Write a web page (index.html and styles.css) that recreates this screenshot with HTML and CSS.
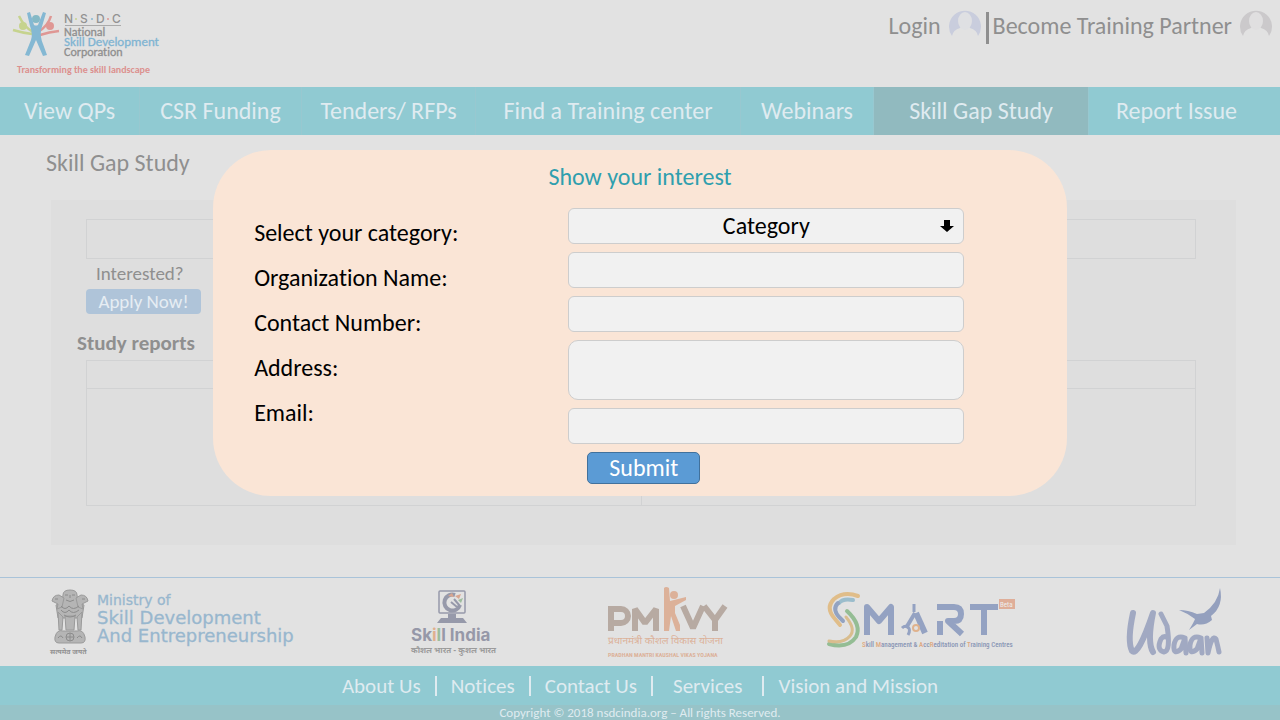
FILE: index.html
```html
<!DOCTYPE html>
<html lang="en">
<head>
<meta charset="utf-8">
<meta name="viewport" content="width=device-width, initial-scale=1">
<title>NSDC - Skill Gap Study</title>
<link rel="stylesheet" href="styles.css">
</head>
<body>
<header class="header">
  <a class="brand" href="#" aria-label="NSDC home">
    <svg class="brand-logo" width="150" height="72" viewBox="0 0 150 72">
      <g fill="none" stroke-linecap="butt">
        <path d="M1 18 Q11 21 20 22 M7 4 Q12 15 21 20" stroke="#c6d38e" stroke-width="2.5"/>
        <path d="M47 19 Q37 20 28 23 M39 4 Q36 14 26 20" stroke="#df9794" stroke-width="2.5"/>
      </g>
      <circle cx="11" cy="14" r="4" fill="#c6d38e"/>
      <circle cx="38" cy="14" r="4" fill="#df9794"/>
      <circle cx="24" cy="7" r="4" fill="#85b9c6"/>
      <path d="M15 1 L18 0 L22 13 Q24 14 26 13 L31 0 L34 1 L29 18 Q28 25 31 32 L35 43 L31 44 L24 28 L17 44 L13 43 L19 28 Q21 22 18 14 Z" fill="#84b8d3"/>
      <g class="logo-sans" font-size="12" font-weight="500" fill="#929292">
        <text x="52" y="11">N</text>
        <text x="68" y="11">S</text>
        <text x="84" y="11">D</text>
        <text x="100" y="11">C</text>
      </g>
      <circle cx="64" cy="7" r="1" fill="#c6d38e"/><circle cx="80" cy="7" r="1" fill="#84b8d3"/><circle cx="96" cy="7" r="1" fill="#df9794"/>
      <path d="M53 13.500H109" stroke="#aaa"/>
      <g class="logo-humanist" font-size="12" stroke-width=".3">
        <text x="52" y="24" fill="#8e8e8e" stroke="#8e8e8e">National</text>
        <text x="52" y="34" fill="#7fb4d2" stroke="#7fb4d2" font-size="13">Skill Development</text>
        <text x="52" y="44" fill="#8e8e8e" stroke="#8e8e8e">Corporation</text>
      </g>
      <text class="logo-humanist" x="5" y="61" font-size="10" font-weight="700" fill="#dc918f">Transforming the skill landscape</text>
    </svg>
  </a>
  <div class="account">
    <a class="account-link" href="#">Login
      <svg class="avatar" width="34" height="32" viewBox="0 2 34 32"><path d="M4 28 A16 16 0 1 1 30 28 Q29 22 22 20 H12 Q5 22 4 28Z" fill="#c9cddd"/><ellipse cx="17" cy="13" rx="7" ry="9" fill="#dfe0e3"/></svg>
    </a>
    <span class="account-rule"></span>
    <a class="account-link" href="#">Become Training Partner
      <svg class="avatar" width="34" height="32" viewBox="0 2 34 32"><path d="M4 28 A16 16 0 1 1 30 28 Q29 22 22 20 H12 Q5 22 4 28Z" fill="#cbc9cb"/><ellipse cx="17" cy="13" rx="7" ry="9" fill="#e0dfe0"/></svg>
    </a>
  </div>
</header>

<nav class="nav">
  <a href="#">View QPs</a>
  <a href="#">CSR Funding</a>
  <a href="#">Tenders/ RFPs</a>
  <a href="#">Find a Training center</a>
  <a href="#">Webinars</a>
  <a class="active" href="#" aria-current="page">Skill Gap Study</a>
  <a href="#">Report Issue</a>
</nav>

<main class="main">
  <h1 class="page-title">Skill Gap Study</h1>
  <section class="panel">
    <div class="summary"></div>
    <p class="interested">Interested?</p>
    <button class="apply" type="button">Apply Now!</button>
    <h2 class="reports-title">Study reports</h2>
    <table class="reports" aria-label="Study reports">
      <thead><tr><th></th><th></th></tr></thead>
      <tbody><tr><td></td><td></td></tr></tbody>
    </table>
  </section>
</main>

<section class="partners" aria-label="Partners">
  <svg width="246" height="72" viewBox="0 0 246 72">
    <g fill="#b5b5b5" stroke="#9a9a9a" stroke-width="1">
      <path d="M13 7 Q13 2 20 2 Q27 2 27 7 L28 14 L34 17 L32 30 L8 30 L6 17 L12 14Z"/>
      <path d="M2 13 Q3 7 9 7 L14 10 L12 19 L7 21 L8 16Z M38 13 Q37 7 31 7 L26 10 L28 19 L33 21 L32 16Z"/>
      <path d="M8 24 L13 29 L12 42 L9 42Z M32 24 L27 29 L28 42 L31 42Z M15 28 H25 L24 42 H16Z"/>
      <path d="M5 49 Q7 41 13 43 H27 Q33 41 35 49 Q36 55 31 55 H9 Q4 55 5 49Z"/>
    </g>
    <g fill="none" stroke="#8c8c8c" stroke-width="1">
      <path d="M15 7 H18 M22 7 H25 M20 7 V10 M16 12 Q20 15 24 12 M5 11 H8 M32 11 H35 M11 18 Q15 23 19 18 Q23 23 29 18 M11 22 Q15 27 19 22 Q23 27 29 22 M14 27 Q20 31 26 27"/>
      <circle cx="20" cy="49" r="4"/><path d="M16 49 H24 M20 45 V53 M8 50 Q11 46 13 50 M27 50 Q30 46 32 50"/>
    </g>
    <text class="logo-hindi" x="0" y="66" font-size="7" font-weight="700" fill="#929292">सत्यमेव जयते</text>
    <g class="logo-verdana" fill="#98b7ce" stroke="#98b7ce" stroke-width=".3">
      <text x="47" y="17" font-size="14">Ministry of</text>
      <text x="47" y="36" font-size="18">Skill Development</text>
      <text x="47" y="54" font-size="18">And Entrepreneurship</text>
    </g>
  </svg>
  <svg width="84" height="72" viewBox="0 0 84 72">
    <g fill="none" stroke="#9699aa">
      <rect x="28" y="3" width="26" height="22" rx="1" stroke-width="1.500"/>
      <path d="M44 7 A8 8 0 1 0 49 17" stroke-width="4"/>
      <path d="M43 11 L49 18 M40 14 L46 19" stroke-width="2"/>
    </g>
    <path d="M37 8 L41 5 L43 9Z M44 8 L50 6 L48 11Z" fill="#d9a58f"/><path d="M47 12 L52 10 L50 15Z" fill="#9dbd9d"/>
    <path d="M37 26 H45 V30 H37Z M30 30 H52 L56 35 H26Z" fill="#9699aa"/>
    <text class="logo-sans" x="0" y="53" font-size="17" font-weight="700" fill="#9698a8">Sk<tspan fill="#e0b08f">i</tspan><tspan fill="#9bbd9c">l</tspan>l India</text>
    <text class="logo-hindi" x="0" y="65" font-size="8" font-weight="700" fill="#9b9b9b">कौशल भारत - कुशल भारत</text>
  </svg>
  <svg width="124" height="76" viewBox="0 0 124 76">
    <g fill="none" stroke="#b7aaa2" stroke-width="6">
      <path d="M4 43 V21 H14 A7 7 0 0 1 14 35 H4"/>
      <path d="M28 43 V21 L38 35 L49 21 V43" stroke-linejoin="bevel"/>
      <path d="M76 18 L86 40 L96 18 M97 18 L108 32 L118 18 M108 31 V43" stroke-linejoin="bevel"/>
    </g>
    <path d="M57 0 Q59 -2 62 0 L63 13 L79 9 L79 12 L68 18 L68 25 L73 37 V43 H69 L64 28 L62 43 H57Z" fill="#dcb199"/>
    <circle cx="67" cy="7" r="4" fill="#dcb199"/>
    <text class="logo-hindi" x="1" y="56" font-size="10" fill="#dcb199">प्रधानमंत्री कौशल विकास योजना</text>
    <text class="logo-narrow" x="1" y="69" font-size="6" font-weight="700" fill="#dcb199">PRADHAN MANTRI KAUSHAL VIKAS YOJANA</text>
  </svg>
  <svg width="192" height="72" viewBox="0 0 192 72">
    <g fill="none" stroke-linecap="round">
      <path d="M32 8 Q18 3 8 11 Q-1 20 9 31 L14 37" stroke="#e0bd89" stroke-width="4"/>
      <path d="M27 12 Q17 10 13 15" stroke="#9bbdcc" stroke-width="4"/>
      <path d="M12 15 Q6 21 13 29 L17 33" stroke="#93a3c1" stroke-width="4"/>
      <path d="M21 23 Q36 37 30 49 Q22 61 3 56" stroke="#94bd94" stroke-width="4"/>
      <path d="M20 29 Q30 41 24 48 Q17 56 3 53" stroke="#d9bd8e" stroke-width="3"/>
    </g>
    <g fill="none" stroke="#94a2c2" stroke-width="6" stroke-linejoin="round">
      <path d="M41 47 V19 L53 33 L65 19 V47"/>
      <path d="M114 47 V33 M111 19 H128 Q135 19 135 26 Q135 33 128 33 H122 L136 46 M144 19 H172 M158 19 V47"/>
      <path d="M90 25 L99 45" stroke-width="6"/>
      <path d="M89 25 L80 40" stroke-width="4"/>
      <path d="M76 40 Q79 37 82 39 Q85 42 82 47" stroke-width="3"/>
      <path d="M88 16 V24" stroke-width="3"/>
    </g>
    <circle cx="90" cy="40" r="3" fill="#e2e2e2" stroke="#dfb28d" stroke-width="2"/>
    <rect x="173" y="11" width="16" height="10" fill="#dfae99"/>
    <text class="logo-narrow" x="174" y="19" font-size="7" fill="#eee">Beta</text>
    <text class="logo-narrow" x="36" y="59" font-size="7" font-weight="500" fill="#8996b5"><tspan fill="#dfa87d">S</tspan>kill <tspan fill="#dfa87d">M</tspan>anagement &amp; <tspan fill="#dfa87d">A</tspan>cc<tspan fill="#dfa87d">R</tspan>editation of <tspan fill="#dfa87d">T</tspan>raining Centres</text>
  </svg>
  <svg width="96" height="72" viewBox="0 0 96 72" role="img" aria-label="Udaan">
    <g fill="none" stroke="#a1a9c2" stroke-width="5" stroke-linecap="round" stroke-linejoin="round">
      <path d="M6 25 Q0 53 5 63 Q11 69 26 25 Q20 54 26 64" stroke-width="6"/>
      <path d="M34 26 L40 38 Q44 63 37 64 Q29 62 34 51 Q37 47 41 50"/>
      <path d="M58 50 Q49 46 47 57 Q46 68 54 61 L58 50 L59 65"/>
      <path d="M74 50 Q65 46 63 57 Q62 68 70 61 L74 50 L75 65"/>
      <path d="M80 50 L81 65 Q85 46 89 51 Q91 59 92 64"/>
    </g>
    <path d="M52 22 Q61 22 70 26 L77 25 Q91 15 93 0 Q97 18 84 28 L85 32 Q78 38 70 36 L62 42 Q67 34 68 31 Q60 25 52 22Z" fill="#94a0be"/>
  </svg>
</section>

<footer>
  <nav class="footer-links" aria-label="Footer">
    <a href="#">About Us</a>
    <a href="#">Notices</a>
    <a href="#">Contact Us</a>
    <a class="wide" href="#">Services</a>
    <a href="#">Vision and Mission</a>
  </nav>
  <p class="copyright">Copyright © 2018 nsdcindia.org – All rights Reserved.</p>
</footer>

<div class="modal" role="dialog" aria-labelledby="modal-title">
  <h2 class="modal-title" id="modal-title">Show your interest</h2>
  <form class="form">
    <div class="labels">
      <label for="category">Select your category:</label>
      <label for="organization">Organization Name:</label>
      <label for="contact">Contact Number:</label>
      <label for="address">Address:</label>
      <label for="email">Email:</label>
    </div>
    <div class="fields">
      <div class="select-wrap">
        <select class="field" id="category"><option>Category</option></select>
        <svg class="arrow" width="14" height="12" viewBox="0 0 14 12"><path d="M4 0 H10 V6 H14 L7 12 L0 6 H4Z"/></svg>
      </div>
      <input class="field" id="organization" type="text">
      <input class="field" id="contact" type="tel">
      <textarea class="field address" id="address"></textarea>
      <input class="field" id="email" type="email">
      <button class="submit" type="submit">Submit</button>
    </div>
  </form>
</div>
</body>
</html>
```

FILE: styles.css
```css
* { box-sizing: border-box; }

body {
  position: relative;
  display: flex;
  flex-direction: column;
  min-height: 100vh;
  margin: 0;
  background: #e2e2e2;
  color: #8f8f8f;
  font: 24px/28px Carlito, Calibri, Lato, sans-serif;
  font-variant-ligatures: none;
}

h1, h2, p { margin: 0; font-size: inherit; font-weight: 400; }
a { color: inherit; text-decoration: none; }
button, input, select, textarea { font: inherit; }

.header {
  display: flex;
  justify-content: space-between;
  align-items: flex-start;
  height: 87px;
  padding: 8px 7px 0 12px;
}
.brand { padding-top: 4px; }
.brand-logo { display: block; overflow: visible; }
.account { display: flex; align-items: flex-start; gap: 4px; }
.account-link { display: flex; align-items: center; gap: 7px; line-height: 36px; }
.account-rule { width: 3px; height: 32px; margin-top: 4px; background: #8f8f8f; }

.logo-sans { font-family: Inter, sans-serif; }
.logo-humanist { font-family: Carlito, Calibri, "Noto Sans", sans-serif; }
.logo-verdana { font-family: "DejaVu Sans", sans-serif; }
.logo-hindi { font-family: "Noto Sans Devanagari", "Noto Sans", sans-serif; }
.logo-narrow { font-family: "Liberation Sans Narrow", "Roboto Condensed", Roboto, sans-serif; }

.nav {
  display: grid;
  grid-template-columns: 140fr 162fr 174fr 265fr 133fr 215fr 191fr;
  height: 48px;
  background: #90cad2;
  color: #dfebf0;
}
.nav a {
  display: flex;
  align-items: center;
  justify-content: center;
  border-right: 1px solid #98c8d0;
  white-space: nowrap;
}
.nav a:last-child { padding-right: 16px; border-right: 0; }
.nav .active { background: #91babf; }

.main { flex: 1; padding: 14px 44px 32px 46px; }
.panel {
  margin: 23px 0 0 5px;
  min-height: 345px;
  padding: 19px 40px 38px 35px;
  background: #dedede;
}
.summary { height: 40px; border: 1px solid #d1d2d3; }
.interested { padding: 3px 0 3px 10px; font-size: 19px; line-height: 24px; }
.apply {
  display: block;
  width: 115px;
  height: 25px;
  padding: 0;
  border: 0;
  border-radius: 4px;
  background: #afc4d9;
  color: #e6edf3;
  font-size: 19px;
  line-height: 24px;
}
.reports-title {
  margin: 17px 0 5px -9px;
  font-size: 21px;
  line-height: 24px;
  font-weight: 700;
}
.reports { width: 100%; border-collapse: collapse; table-layout: fixed; }
.reports th, .reports td { border: 1px solid #d1d2d3; padding: 0; }
.reports th { height: 28px; }
.reports td { height: 117px; }

.partners {
  display: grid;
  grid-template-columns: 361fr 197fr 219fr 301fr 95fr;
  align-items: start;
  height: 89px;
  padding: 10px 57px 0 50px;
  border-top: 1px solid #a9c3d9;
}
.partners svg { display: block; overflow: visible; }

.footer-links {
  display: flex;
  align-items: center;
  justify-content: center;
  height: 39px;
  background: #90cad2;
  color: #dfebf0;
  font-size: 21px;
  line-height: 20px;
}
.footer-links a { padding: 0 14px; }
.footer-links a + a { border-left: 2px solid #dfebf0; }
.footer-links .wide { padding: 0 20px; }
.copyright {
  background: #97c3c8;
  color: #dfebf0;
  font-size: 13px;
  line-height: 15px;
  text-align: center;
}

.modal {
  position: absolute;
  top: 150px;
  left: 0;
  right: 0;
  width: 66.7%;
  margin: 0 auto;
  padding: 13px 0 12px;
  border-radius: 58px;
  background: #fae5d6;
  color: #000;
}
.modal-title { color: #2f9fae; text-align: center; }
.form {
  display: grid;
  grid-template-columns: 314fr 396fr;
  padding: 17px 12% 0 41px;
}
.labels { display: flex; flex-direction: column; gap: 17px; padding-top: 11px; }
.fields { display: flex; flex-direction: column; gap: 8px; }
.field {
  width: 100%;
  height: 36px;
  padding: 0 12px;
  border: 1px solid #cdcdcd;
  border-radius: 6px;
  background: #f1f1f1;
  color: #000;
}
.select-wrap { position: relative; display: flex; }
select.field { appearance: none; text-align-last: center; }
.arrow { position: absolute; top: 12px; right: 10px; pointer-events: none; }
.address { display: block; height: 60px; border-radius: 10px; resize: none; }
.submit {
  width: 113px;
  height: 32px;
  margin-left: 19px;
  padding: 0;
  border: 1px solid #41719c;
  border-radius: 5px;
  background: #5b9bd5;
  color: #fff;
  line-height: 28px;
}
```
